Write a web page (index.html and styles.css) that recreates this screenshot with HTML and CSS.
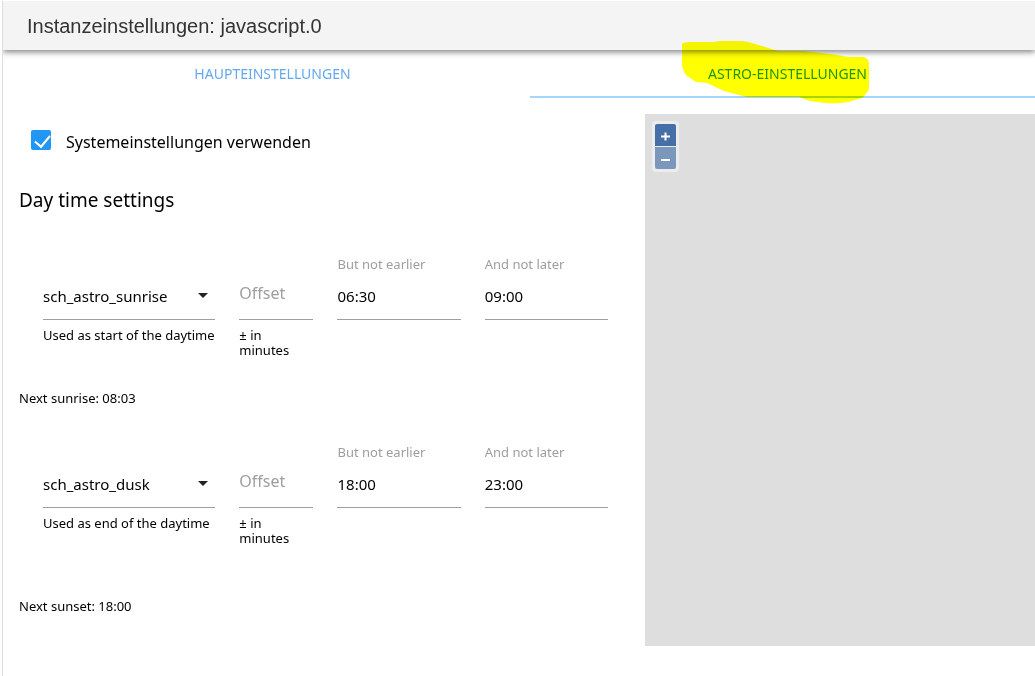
FILE: index.html
```html
<!DOCTYPE html>
<html lang="de">
<head>
<meta charset="utf-8">
<title>Instanzeinstellungen: javascript.0</title>
<link rel="stylesheet" href="styles.css">
</head>
<body>
<div class="dialog">
  <header class="dialog-header"><h1 class="dialog-title">Instanzeinstellungen: javascript.0</h1></header>
  <nav class="tabs">
    <a class="tab" href="#main">HAUPTEINSTELLUNGEN</a>
    <a class="tab tab-active" href="#astro">ASTRO-EINSTELLUNGEN
      <svg class="marker" width="188" height="64" viewBox="0 0 188 64" aria-hidden="true"><path d="M0 4 Q1 2 8 2 L32 2 L37 1 L60 1 L66 2 L80 6 L96 11 L122 11 L140 13 L155 15 L166 17 L181 17 Q187 18 187 24 L187 49 Q183 56 180 58 L166 62 Q157 64 143 63 L128 61 L117 57 L65 57 L42 51 L25 43 L14 42 L4 35 Q1 31 0 26 Z" fill="#ffff00"/></svg>
    </a>
  </nav>
  <main class="content">
    <form class="settings">
      <label class="check-row"><input class="check" type="checkbox" checked><span>Systemeinstellungen verwenden</span></label>
      <h2 class="section-title">Day time settings</h2>
      <div class="fields">
        <div class="field"><select class="control select" id="start" aria-describedby="start-help"><option>sch_astro_sunrise</option></select><label class="help" id="start-help" for="start">Used as start of the daytime</label></div>
        <div class="field"><input class="control offset" id="start-offset" type="text" placeholder="Offset"><label class="help" for="start-offset">± in minutes</label></div>
        <div class="field"><label class="caption" for="start-min">But not earlier</label><input class="control" id="start-min" type="text" value="06:30"></div>
        <div class="field"><label class="caption" for="start-max">And not later</label><input class="control" id="start-max" type="text" value="09:00"></div>
      </div>
      <p class="next">Next sunrise: 08:03</p>
      <div class="fields">
        <div class="field"><select class="control select" id="end" aria-describedby="end-help"><option>sch_astro_dusk</option></select><label class="help" id="end-help" for="end">Used as end of the daytime</label></div>
        <div class="field"><input class="control offset" id="end-offset" type="text" placeholder="Offset"><label class="help" for="end-offset">± in minutes</label></div>
        <div class="field"><label class="caption" for="end-min">But not earlier</label><input class="control" id="end-min" type="text" value="18:00"></div>
        <div class="field"><label class="caption" for="end-max">And not later</label><input class="control" id="end-max" type="text" value="23:00"></div>
      </div>
      <p class="next next-last">Next sunset: 18:00</p>
    </form>
    <section class="map" aria-label="Map">
      <div class="zoom">
        <button class="zoom-button zoom-in" type="button" aria-label="Zoom in"><svg width="9" height="9" viewBox="0 0 9 9"><path d="M0 4.500H9M4.500 .5V8.500" stroke="#fff" stroke-width="2"/></svg></button>
        <button class="zoom-button zoom-out" type="button" aria-label="Zoom out"><svg width="9" height="9" viewBox="0 0 9 9"><path d="M0 5H9" stroke="#fff" stroke-width="2"/></svg></button>
      </div>
    </section>
  </main>
</div>
</body>
</html>
```
FILE: styles.css
```css
* { box-sizing: border-box; }
body {
  margin: 0;
  padding: 1px 0 0 2px;
  background: #fff;
  color: #000;
  font: 13px/15px "Noto Sans", sans-serif;
  overflow-x: hidden;
}
.dialog { min-height: calc(100vh - 1px); border-left: 1px solid #dedede; overflow: hidden; }
.dialog-header {
  padding: 10px 24px 9px;
  background: #f4f4f4;
  box-shadow: 0 2px 6px rgba(0, 0, 0, .5);
}
.dialog-title { margin: 0; font: 400 20px/30px "Liberation Sans", Arial, sans-serif; color: #333; }
.tabs { display: flex; margin: 0 -10px 0 12px; }
.tab {
  position: relative;
  flex: 1;
  padding: 14px 0 12px;
  border-bottom: 2px solid transparent;
  color: #64a9ee;
  font-size: 14px;
  line-height: 20px;
  text-align: center;
  text-decoration: none;
}
.tab-active { border-color: #a6d5fa; color: #2196f3; }
.marker { position: absolute; top: -10px; left: calc(50% - 106px); mix-blend-mode: multiply; pointer-events: none; }
.content { display: grid; grid-template-columns: 626fr 390fr; padding: 16px 0 30px 16px; }
.settings { padding: 16px 0 32px; }
.check-row { display: flex; align-items: center; gap: 15px; padding-left: 12px; font-size: 16px; line-height: 24px; }
.check {
  appearance: none;
  width: 20px;
  height: 20px;
  margin: 0 0 4px;
  border-radius: 2px;
  background: #2196f3;
}
.check:checked::before {
  content: "";
  display: block;
  width: 7px;
  height: 13px;
  margin: 2px 0 0 7px;
  border: solid #fff;
  border-width: 0 2px 2px 0;
  transform: rotate(40deg);
}
.section-title { margin: 34px 0 45px; font-size: 19px; line-height: 24px; font-weight: 400; }
.fields { display: grid; grid-template-columns: 4fr 2fr 3fr 3fr; padding: 0 25px 0 12px; min-height: 104px; }
.field { display: grid; grid-template-rows: 15px 48px auto; align-content: start; padding: 0 12px; min-width: 0; }
.caption { grid-row: 1; color: #9e9e9e; white-space: nowrap; }
.control {
  grid-row: 2;
  appearance: none;
  width: 100%;
  min-width: 0;
  height: 48px;
  margin: 0;
  padding: 0;
  border: 0;
  border-bottom: 1px solid #9e9e9e;
  border-radius: 0;
  outline: 0;
  background: transparent;
  color: #000;
  font: 15px/20px "Noto Sans", sans-serif;
}
.select { background: url("data:image/svg+xml,%3Csvg xmlns='http://www.w3.org/2000/svg' width='10' height='5'%3E%3Cpath d='M0 0H10L5 5Z' fill='%23222'/%3E%3C/svg%3E") no-repeat right 7px center; }
.offset { font-size: 16px; padding-bottom: 6px; }
.offset::placeholder { color: #9e9e9e; opacity: 1; }
.help { grid-row: 3; padding-top: 8px; }
.next { margin: 30px 0 39px; }
.next-last { margin: 50px 0 0; }
.map { padding: 7px; background: #dedede; }
.zoom { display: grid; gap: 1px; width: 27px; padding: 3px; border-radius: 4px; background: #ececec; }
.zoom-button { display: flex; align-items: center; justify-content: center; height: 22px; padding: 2px 0 0; border: 0; background: #7b98bc; }
.zoom-in { border-radius: 2px 2px 0 0; background: #466fa7; }
.zoom-out { border-radius: 0 0 2px 2px; }
```
